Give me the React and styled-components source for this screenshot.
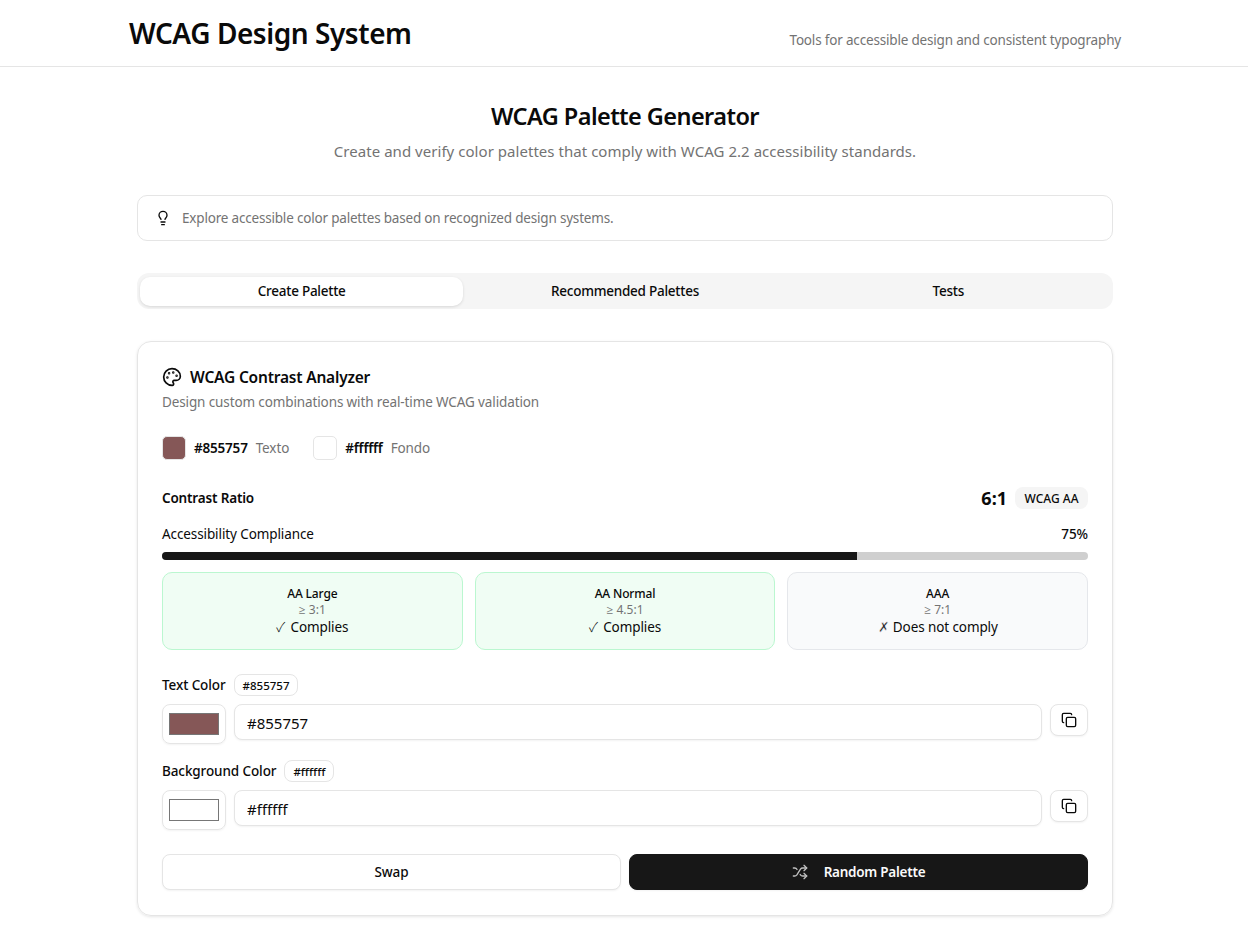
import React from "react";
import styled, { createGlobalStyle } from "styled-components";
import { Lightbulb, Palette, Copy, Shuffle } from "lucide-react";

const GlobalStyle = createGlobalStyle`
  * { box-sizing: border-box; }
  body {
    margin: 0;
    background: #fff;
    color: #0a0a0a;
    font-family: "Noto Sans", "Open Sans", sans-serif;
  }
`;

const Header = styled.header`
  height: 67px;
  border-bottom: 1px solid #e5e5e5;
  padding-left: 2px;
`;

const HeaderInner = styled.div`
  width: 992px;
  height: 66px;
  margin: 0 auto;
  display: flex;
  justify-content: space-between;
  align-items: flex-end;
  padding-bottom: 16px;
`;

const Brand = styled.h1`
  margin: 0 0 1px;
  font-size: 28px;
  line-height: 32px;
  font-weight: 600;
  letter-spacing: -0.45px;
`;

const Tagline = styled.p`
  margin: 0;
  font-size: 13.5px;
  line-height: 20px;
  color: #737373;
  letter-spacing: -0.18px;
`;

const Main = styled.main`
  width: 978px;
  margin: 0 auto;
  padding: 33px 0 30px 2px;
`;

const Intro = styled.div`
  text-align: center;
  margin-bottom: 30px;
`;

const Title = styled.h2`
  margin: 0 0 6px;
  font-size: 23.5px;
  line-height: 32px;
  font-weight: 600;
  letter-spacing: -0.57px;
`;

const Subtitle = styled.p`
  margin: 0;
  font-size: 15px;
  line-height: 27px;
  color: #737373;
  letter-spacing: 0.04px;
`;

const Hint = styled.div`
  height: 46px;
  display: flex;
  align-items: center;
  gap: 11px;
  padding: 0 17px;
  border: 1px solid #e5e5e5;
  border-radius: 10px;
  margin-bottom: 32px;
  font-size: 13.5px;
  color: #737373;
  letter-spacing: -0.19px;

  svg { color: #0a0a0a; flex: none; }
`;

const Tabs = styled.div`
  height: 36px;
  display: grid;
  grid-template-columns: repeat(3, 1fr);
  padding: 4px 3px 3px;
  background: #f5f5f5;
  border-radius: 12px;
  margin-bottom: 32px;
`;

const Tab = styled.button`
  border: none;
  border-radius: 10px;
  background: ${(p) => (p.$active ? "#fff" : "transparent")};
  box-shadow: ${(p) => (p.$active ? "0 1px 3px rgba(0,0,0,.12)" : "none")};
  color: #0a0a0a;
  font-family: inherit;
  font-size: 13.5px;
  font-weight: 500;
  letter-spacing: -0.25px;
  padding: 0 0 2px;
`;

const Card = styled.section`
  border: 1px solid #e5e5e5;
  border-radius: 14px;
  padding: 23px 24px 25px;
  box-shadow: 0 1px 3px rgba(0, 0, 0, 0.1);
`;

const CardTitle = styled.h3`
  margin: 0 0 1px;
  display: flex;
  align-items: center;
  gap: 8px;
  font-size: 15.5px;
  line-height: 24px;
  font-weight: 600;
  letter-spacing: -0.2px;
`;

const CardText = styled.p`
  margin: 0 0 22px;
  font-size: 13.5px;
  line-height: 24px;
  color: #737373;
  letter-spacing: -0.12px;
`;

const Preview = styled.div`
  display: flex;
  align-items: center;
  gap: 24px;
  height: 24px;
  margin-bottom: 27px;
`;

const PreviewItem = styled.div`
  display: flex;
  align-items: center;
  gap: 8px;
  font-size: 13.5px;
`;

const Dot = styled.span`
  width: 24px;
  height: 24px;
  border-radius: 5px;
  border: 1px solid #e5e5e5;
  background: ${(p) => p.$color};
`;

const Hex = styled.strong`
  font-weight: 600;
  letter-spacing: -0.2px;
`;

const Role = styled.span`
  color: #737373;
  letter-spacing: -0.1px;
`;

const Row = styled.div`
  display: flex;
  align-items: center;
  justify-content: space-between;
  height: 22px;
  margin-bottom: ${(p) => p.$gap}px;
`;

const RowLabel = styled.span`
  font-size: 13.5px;
  font-weight: ${(p) => p.$weight || 400};
  letter-spacing: ${(p) => p.$tracking || "-0.1px"};
`;

const RatioGroup = styled.div`
  display: flex;
  align-items: center;
  gap: 8px;
`;

const Ratio = styled.span`
  font-size: 18px;
  font-weight: 700;
`;

const Badge = styled.span`
  height: 22px;
  padding: 0 9.5px;
  border-radius: 8px;
  background: #f5f5f5;
  display: flex;
  align-items: center;
  font-size: 12px;
  font-weight: 500;
`;

const Track = styled.div`
  height: 8px;
  border-radius: 4px;
  background: #cfcfcf;
  overflow: hidden;
  margin-bottom: 12px;
`;

const Fill = styled.div`
  height: 100%;
  background: #171717;
`;

const Levels = styled.div`
  display: grid;
  grid-template-columns: repeat(3, 1fr);
  gap: 12px;
  margin-bottom: 24px;
`;

const Level = styled.div`
  height: 78px;
  padding-top: 13px;
  text-align: center;
  border-radius: 10px;
  border: 1px solid ${(p) => (p.$pass ? "#bbf7d0" : "#e5e7eb")};
  background: ${(p) => (p.$pass ? "#f0fdf4" : "#f9fafb")};
`;

const LevelName = styled.div`
  font-size: 12px;
  line-height: 16px;
  font-weight: 500;
  letter-spacing: -0.15px;
`;

const LevelMin = styled.div`
  font-size: 12px;
  line-height: 16px;
  color: #737373;
`;

const LevelStatus = styled.div`
  font-size: 13.5px;
  line-height: 18px;
  letter-spacing: -0.1px;
`;

/* the installed cross glyph is heavy, a stroke in the card colour thins it */
const StatusMark = styled.span`
  font-family: "Noto Sans CJK JP", "Noto Sans", sans-serif;
  font-weight: 300;
  line-height: 0;
  margin-right: ${(p) => (p.$pass ? 2 : 0)}px;
  -webkit-text-stroke: ${(p) => (p.$pass ? "0" : "0.5px #f9fafb")};
`;

const FieldLabel = styled.div`
  display: flex;
  align-items: center;
  gap: 8px;
  height: 22px;
  margin-bottom: 8px;
  font-size: 13.5px;
  font-weight: 500;
  letter-spacing: -0.1px;
`;

const Chip = styled.span`
  height: 22px;
  padding: 0 8px;
  display: flex;
  align-items: center;
  border: 1px solid #e5e5e5;
  border-radius: 8px;
  font-size: 11.5px;
  font-weight: 500;
  letter-spacing: 0;
`;

const Field = styled.div`
  display: flex;
  align-items: flex-start;
  gap: 8px;
  margin-bottom: ${(p) => p.$gap}px;
`;

const ColorWell = styled.div`
  width: 64px;
  height: 40px;
  padding: 8px 6px;
  flex: none;
  border: 1px solid #e5e5e5;
  border-radius: 8px;
  box-shadow: 0 1px 2px rgba(0, 0, 0, 0.05);
`;

const ColorFace = styled.div`
  height: 22px;
  border: 1px solid #767676;
  background: ${(p) => p.$color};
`;

const HexInput = styled.input`
  flex: 1;
  min-width: 0;
  height: 36px;
  padding: 1px 12px 0;
  border: 1px solid #e5e5e5;
  border-radius: 8px;
  box-shadow: 0 1px 2px rgba(0, 0, 0, 0.05);
  outline: none;
  color: #0a0a0a;
  font-family: inherit;
  font-size: 15px;
`;

const CopyButton = styled.button`
  width: 38px;
  height: 32px;
  flex: none;
  display: flex;
  align-items: center;
  justify-content: center;
  padding: 0;
  background: #fff;
  color: #0a0a0a;
  border: 1px solid #e5e5e5;
  border-radius: 8px;
  box-shadow: 0 1px 2px rgba(0, 0, 0, 0.05);
`;

const Actions = styled.div`
  display: grid;
  grid-template-columns: 1fr 1fr;
  gap: 8px;
`;

const ActionButton = styled.button`
  height: 36px;
  display: flex;
  align-items: center;
  justify-content: center;
  gap: 16px;
  border-radius: 8px;
  border: 1px solid ${(p) => (p.$primary ? "#171717" : "#e5e5e5")};
  background: ${(p) => (p.$primary ? "#171717" : "#fff")};
  color: ${(p) => (p.$primary ? "#fafafa" : "#0a0a0a")};
  box-shadow: 0 1px 2px rgba(0, 0, 0, 0.05);
  font-family: inherit;
  font-size: 13.5px;
  font-weight: ${(p) => (p.$primary ? 600 : 500)};
  letter-spacing: ${(p) => (p.$primary ? "-0.25px" : "-0.1px")};

  svg { opacity: 0.75; }
`;

const levels = [
  { name: "AA Large", min: "≥ 3:1", pass: true },
  { name: "AA Normal", min: "≥ 4.5:1", pass: true },
  { name: "AAA", min: "≥ 7:1", pass: false },
];

const ColorField = ({ label, color, gap }) => (
  <>
    <FieldLabel>
      {label}
      <Chip>{color}</Chip>
    </FieldLabel>
    <Field $gap={gap}>
      <ColorWell>
        <ColorFace $color={color} />
      </ColorWell>
      <HexInput defaultValue={color} />
      <CopyButton aria-label="Copy">
        <Copy size={16} />
      </CopyButton>
    </Field>
  </>
);

export default function App() {
  return (
    <>
      <GlobalStyle />
      <Header>
        <HeaderInner>
          <Brand>WCAG Design System</Brand>
          <Tagline>Tools for accessible design and consistent typography</Tagline>
        </HeaderInner>
      </Header>
      <Main>
        <Intro>
          <Title>WCAG Palette Generator</Title>
          <Subtitle>
            Create and verify color palettes that comply with WCAG 2.2 accessibility standards.
          </Subtitle>
        </Intro>

        <Hint>
          <Lightbulb size={16} />
          Explore accessible color palettes based on recognized design systems.
        </Hint>

        <Tabs>
          <Tab $active>Create Palette</Tab>
          <Tab>Recommended Palettes</Tab>
          <Tab>Tests</Tab>
        </Tabs>

        <Card>
          <CardTitle>
            <Palette size={20} />
            WCAG Contrast Analyzer
          </CardTitle>
          <CardText>Design custom combinations with real-time WCAG validation</CardText>

          <Preview>
            <PreviewItem>
              <Dot $color="#855757" />
              <Hex>#855757</Hex>
              <Role>Texto</Role>
            </PreviewItem>
            <PreviewItem>
              <Dot $color="#ffffff" />
              <Hex>#ffffff</Hex>
              <Role>Fondo</Role>
            </PreviewItem>
          </Preview>

          <Row $gap={14}>
            <RowLabel $weight={600} $tracking="-0.17px">Contrast Ratio</RowLabel>
            <RatioGroup>
              <Ratio>6:1</Ratio>
              <Badge>WCAG AA</Badge>
            </RatioGroup>
          </Row>

          <Row $gap={7}>
            <RowLabel>Accessibility Compliance</RowLabel>
            <RowLabel $weight={500}>75%</RowLabel>
          </Row>
          <Track>
            <Fill style={{ width: "75%" }} />
          </Track>

          <Levels>
            {levels.map((l) => (
              <Level key={l.name} $pass={l.pass}>
                <LevelName>{l.name}</LevelName>
                <LevelMin>{l.min}</LevelMin>
                <LevelStatus>
                  <StatusMark $pass={l.pass}>{l.pass ? "✓" : "✗"}</StatusMark> {l.pass ? "Complies" : "Does not comply"}
                </LevelStatus>
              </Level>
            ))}
          </Levels>

          <ColorField label="Text Color" color="#855757" gap={16} />
          <ColorField label="Background Color" color="#ffffff" gap={24} />

          <Actions>
            <ActionButton>Swap</ActionButton>
            <ActionButton $primary>
              <Shuffle size={16} />
              Random Palette
            </ActionButton>
          </Actions>
        </Card>
      </Main>
    </>
  );
}
